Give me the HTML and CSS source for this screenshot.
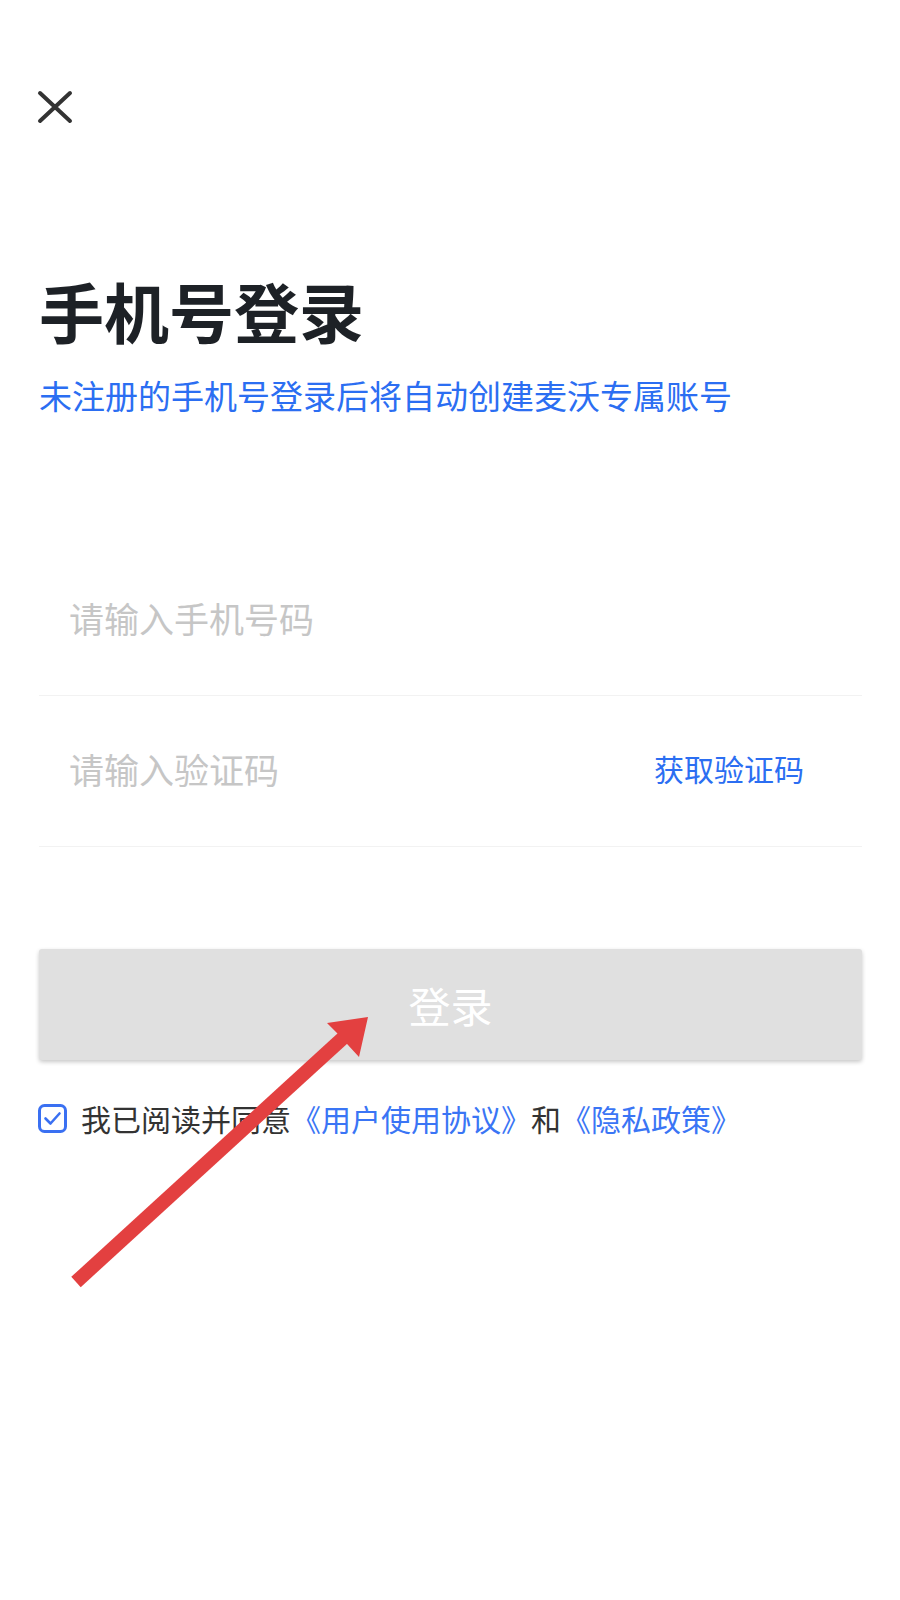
FILE: index.html
```html
<!DOCTYPE html>
<html lang="zh-CN">
<head>
<meta charset="utf-8">
<title>手机号登录</title>
<link rel="stylesheet" href="styles.css">
</head>
<body>
<div class="page">
  <div class="close">
    <svg width="40" height="40" viewBox="0 0 40 40"><path d="M5 6 L35 34 M35 6 L5 34" stroke="#333" stroke-width="4" stroke-linecap="round" fill="none"/></svg>
  </div>
  <h1 class="title">手机号登录</h1>
  <p class="subtitle">未注册的手机号登录后将自动创建麦沃专属账号</p>
  <div class="form">
    <div class="field"><span class="placeholder">请输入手机号码</span></div>
    <div class="field"><span class="placeholder">请输入验证码</span><span class="getcode">获取验证码</span></div>
  </div>
  <div class="btn">登录</div>
  <div class="agree">
    <span class="check"><svg width="29" height="29" viewBox="0 0 29 29"><rect x="1.5" y="1.5" width="26" height="26" rx="5" fill="none" stroke="#3a70f2" stroke-width="3"/><path d="M7.5 14.5 L12.5 19.5 L21.5 9.5" fill="none" stroke="#3a70f2" stroke-width="2.6" stroke-linecap="round" stroke-linejoin="round"/></svg></span>
    <span class="agree-text">我已阅读并同意<span class="link">《用户使用协议》</span>和<span class="link">《隐私政策》</span></span>
  </div>
</div>
<svg class="arrow" width="900" height="1600" viewBox="0 0 900 1600">
  <line x1="76" y1="1282" x2="343" y2="1038" stroke="#e34040" stroke-width="14"/>
  <polygon points="368,1017 327,1023 337,1033 348,1045 359,1057" fill="#e34040"/>
</svg>
</body>
</html>
```

FILE: styles.css
```css
html, body {
  margin: 0;
  padding: 0;
  background: #fff;
}
body {
  font-family: "Noto Sans CJK SC", "Noto Sans", sans-serif;
  width: 900px;
  height: 1600px;
  position: relative;
  overflow: hidden;
}
.page {
  padding: 87px 38px 0 39px;
}
.close {
  margin-left: -4px;
  height: 40px;
}
.close svg { display: block; }
.title {
  margin: 151px 0 0 0;
  font-size: 65px;
  line-height: 1;
  font-weight: 700;
  color: #1d2126;
}
.subtitle {
  margin: 36px 0 0 0;
  font-size: 33px;
  line-height: 1;
  color: #2b6ef2;
}
.form {
  margin-top: 133px;
}
.field {
  box-sizing: border-box;
  height: 151px;
  border-bottom: 1px solid #f2f2f2;
  display: flex;
  align-items: center;
  justify-content: space-between;
  padding: 0 58px 6px 30px;
}
.placeholder {
  font-size: 35px;
  color: #c6c6c6;
}
.getcode {
  font-size: 30px;
  color: #2b6ef2;
}
.btn {
  margin-top: 102px;
  height: 111px;
  border-radius: 3px;
  background: #e0e0e0;
  box-shadow: 0 2px 4px rgba(0, 0, 0, 0.22);
  display: flex;
  align-items: center;
  justify-content: center;
  color: #fff;
  font-size: 42px;
}
.agree {
  margin-top: 36px;
  display: flex;
  align-items: center;
  gap: 14px;
  margin-left: -1px;
}
.check svg { display: block; }
.agree-text {
  font-size: 30px;
  color: #333;
}
.link {
  color: #3a75f5;
}
.arrow {
  position: absolute;
  left: 0;
  top: 0;
  pointer-events: none;
}
```
